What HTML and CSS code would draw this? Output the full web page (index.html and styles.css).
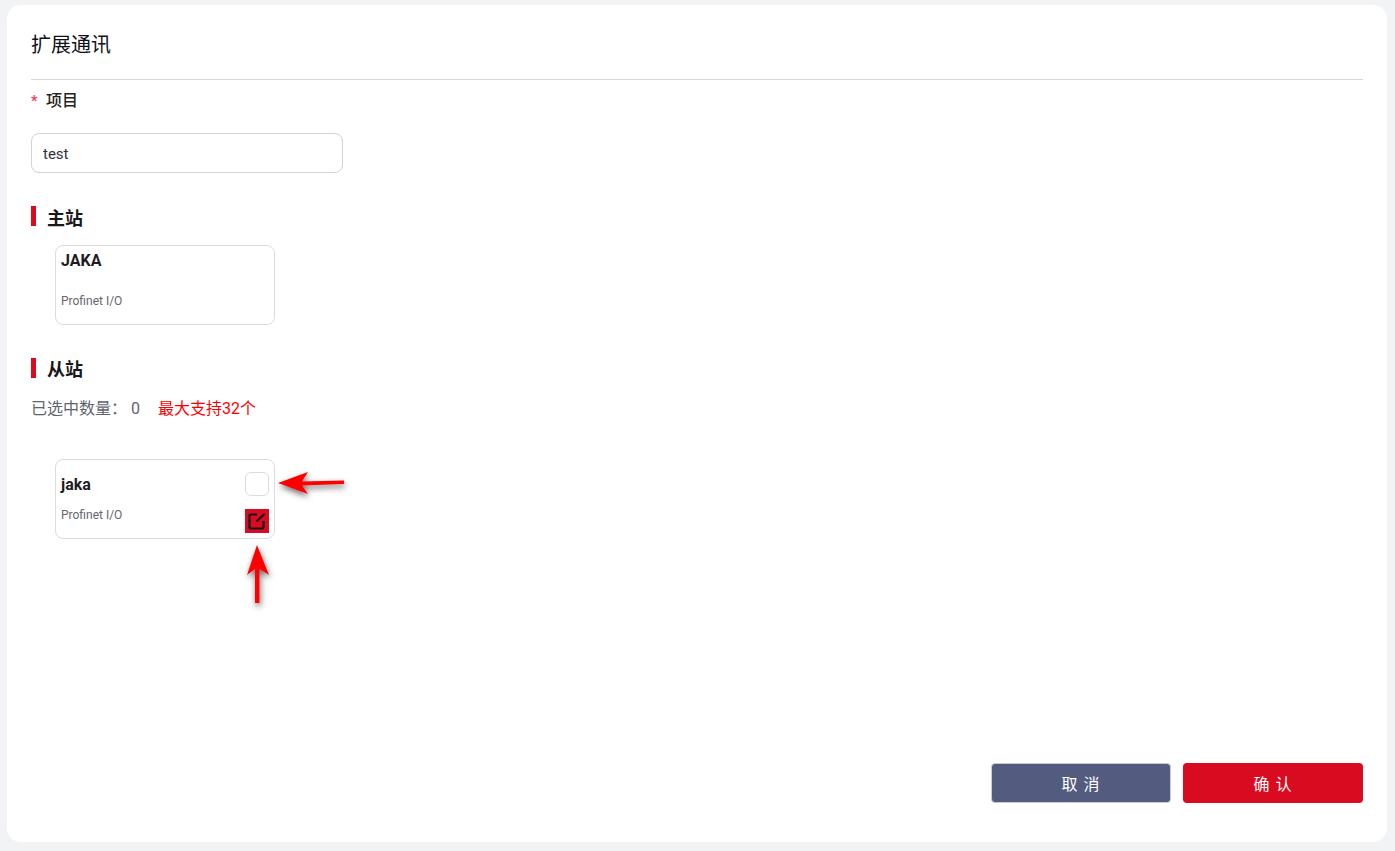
FILE: index.html
```html
<!DOCTYPE html>
<html lang="zh-CN">
<head>
  <meta charset="UTF-8" />
  <title>扩展通讯</title>
  <link rel="stylesheet" href="styles.css">
</head>
<body>
  <main class="panel">
    <h1 class="panel-title">扩展通讯</h1>

    <label class="field-label"><span class="required">*</span>项目</label>
    <input class="text-input" type="text" value="test">

    <h2 class="section-title section-master">主站</h2>
    <div class="card card-master">
      <div class="card-name">JAKA</div>
      <div class="card-type">Profinet I/O</div>
    </div>

    <h2 class="section-title section-slave">从站</h2>
    <p class="count-row">
      <span>已选中数量：</span><span class="count-num">0</span><span class="count-max">最大支持32个</span>
    </p>

    <div class="card card-slave">
      <div class="card-info">
        <div class="card-name">jaka</div>
        <div class="card-type">Profinet I/O</div>
      </div>
      <div class="card-actions">
        <span class="check-box"></span>
        <span class="edit-btn">
          <svg width="18" height="18" viewBox="0 0 18 18" fill="none" stroke="#14141c" stroke-width="2.200">
            <path d="M9 2.500H3A1.500 1.500 0 0 0 1.500 4V15A1.500 1.500 0 0 0 3 16.500H14A1.500 1.500 0 0 0 15.500 15V9"/>
            <path d="M8.500 9.500L16.500 2"/>
          </svg>
        </span>
      </div>
    </div>

    <div class="actions">
      <button class="btn btn-cancel">取 消</button>
      <button class="btn btn-ok">确 认</button>
    </div>
  </main>

  <!-- red arrows drawn on top of the screenshot -->
  <svg class="note-arrow arrow-right" width="80" height="40" viewBox="0 0 80 40">
    <defs>
      <filter id="arrowShadow" x="-30%" y="-50%" width="160%" height="200%">
        <feDropShadow dx="1" dy="3" stdDeviation="3" flood-color="#000" flood-opacity="0.6"/>
      </filter>
    </defs>
    <path filter="url(#arrowShadow)" fill="#fe0000" d="M5 15L35 4L29 13.500L71 12.500L71 16L29 17.500L35 26Z"/>
  </svg>
  <svg class="note-arrow arrow-up" width="40" height="80" viewBox="0 0 40 80">
    <path filter="url(#arrowShadow)" fill="#fe0000" d="M18 5L30 35L20.500 29L20.500 63L16 63L16 29L8 35Z"/>
  </svg>
</body>
</html>
```
FILE: styles.css
```css
* {
  box-sizing: border-box;
}
html, body {
  height: 100%;
}
body {
  margin: 0;
  padding: 5px 8px 9px 7px;
  background: #f2f3f5;
  font-family: Roboto, "Noto Sans CJK SC", sans-serif;
  color: #1f1f24;
  overflow: hidden;
}
.panel {
  height: 100%;
  display: flex;
  flex-direction: column;
  align-items: flex-start;
  padding: 0 24px 39px;
  background: #fff;
  border-radius: 14px;
}
.panel-title {
  width: 100%;
  height: 75px;
  margin: 0;
  padding-top: 25px;
  border-bottom: 1px solid #d9d9de;
  font-size: 20px;
  line-height: 30px;
  font-weight: 400;
  color: #111116;
}
.field-label {
  margin-top: 8px;
  height: 24px;
  font-size: 16px;
  line-height: 26px;
  font-weight: 500;
}
.required {
  display: inline-block;
  width: 15px;
  color: #fb3b5e;
  font-size: 14px;
  font-weight: 700;
}
.text-input {
  width: 312px;
  height: 40px;
  margin-top: 21px;
  padding: 2px 11px 0;
  border: 1px solid #d0d3de;
  border-radius: 8px;
  font: inherit;
  font-size: 15px;
  color: #30303a;
  outline: none;
}
.section-title {
  margin: 0;
  height: 20px;
  padding-left: 11px;
  border-left: 5px solid #d90b20;
  font-size: 18px;
  line-height: 24px;
  font-weight: 700;
  color: #17171c;
}
.section-master {
  margin-top: 33px;
  line-height: 26px;
}
.section-slave {
  margin-top: 33px;
}
.card {
  width: 220px;
  height: 80px;
  margin-left: 24px;
  border: 1px solid #dcdcdf;
  border-radius: 8px;
  padding: 0 5px;
}
.card-master {
  margin-top: 19px;
}
.card-name {
  font-size: 16px;
  line-height: 22px;
  font-weight: 700;
  color: #1c1c22;
}
.card-type {
  font-size: 12px;
  line-height: 16px;
  color: #66666e;
}
.card-master .card-name {
  margin-top: 4px;
}
.card-master .card-type {
  margin-top: 21px;
}
.count-row {
  margin: 20px 0 0;
  height: 21px;
  display: flex;
  font-size: 16px;
  line-height: 22px;
  color: #60646e;
}
.count-num {
  margin-left: 4px;
  width: 27px;
}
.count-max {
  color: #fe0000;
}
.card-slave {
  margin-top: 40px;
  display: flex;
  justify-content: space-between;
}
.card-slave .card-name {
  margin-top: 14px;
}
.card-slave .card-type {
  margin-top: 11px;
}
.card-actions {
  display: flex;
  flex-direction: column;
  gap: 13px;
  padding-top: 12px;
}
.check-box {
  width: 24px;
  height: 24px;
  border: 1px solid #dcdcdf;
  border-radius: 6px;
}
.edit-btn {
  width: 24px;
  height: 24px;
  display: flex;
  align-items: center;
  justify-content: center;
  background: #d90b20;
}
.actions {
  margin-top: auto;
  align-self: flex-end;
  display: flex;
  gap: 12px;
}
.btn {
  width: 180px;
  height: 40px;
  border-radius: 4px;
  font: inherit;
  font-size: 16px;
  font-weight: 400;
  letter-spacing: 1px;
  color: #fff;
}
.btn-cancel {
  background: #535b7f;
  border: 1px solid #c9cad3;
}
.btn-ok {
  background: #d90b20;
  border: none;
}
.note-arrow {
  position: absolute;
}
.arrow-right {
  left: 273px;
  top: 468px;
}
.arrow-up {
  left: 239px;
  top: 540px;
}
```
